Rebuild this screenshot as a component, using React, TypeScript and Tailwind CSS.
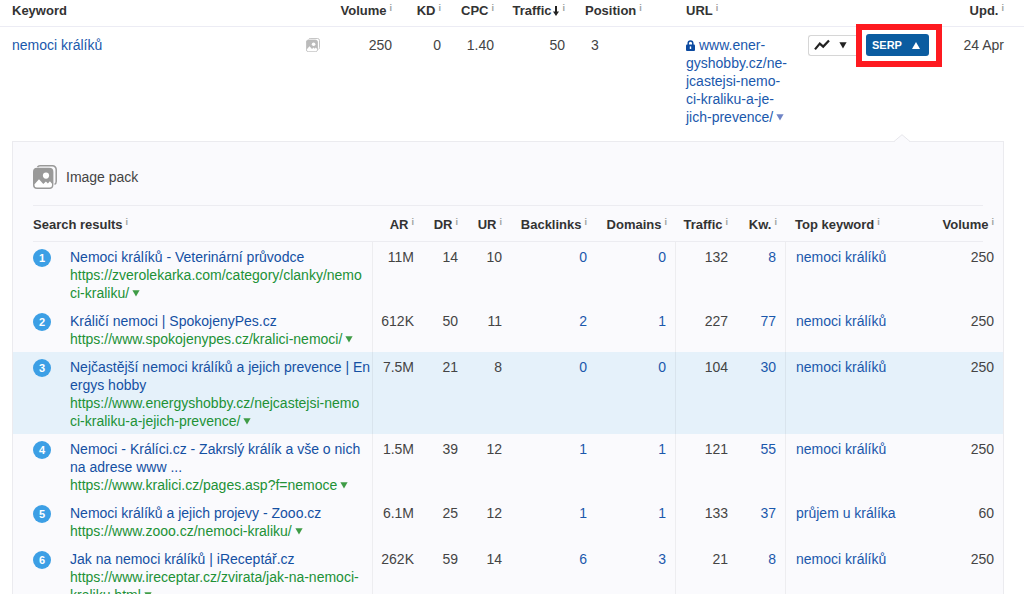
import type { ReactNode } from 'react';

interface Result {
  title: string;
  url: string;
  ar: string;
  dr: number;
  ur: number;
  backlinks: number;
  domains: number;
  traffic: number;
  kw: number;
  topKeyword: string;
  volume: number;
  highlighted?: boolean;
}

const results: Result[] = [
  {
    title: 'Nemoci králíků - Veterinární průvodce',
    url: 'https://zverolekarka.com/category/clanky/nemo\nci-kraliku/',
    ar: '11M', dr: 14, ur: 10, backlinks: 0, domains: 0, traffic: 132, kw: 8,
    topKeyword: 'nemoci králíků', volume: 250,
  },
  {
    title: 'Králičí nemoci | SpokojenyPes.cz',
    url: 'https://www.spokojenypes.cz/kralici-nemoci/',
    ar: '612K', dr: 50, ur: 11, backlinks: 2, domains: 1, traffic: 227, kw: 77,
    topKeyword: 'nemoci králíků', volume: 250,
  },
  {
    title: 'Nejčastější nemoci králíků a jejich prevence | En\nergys hobby',
    url: 'https://www.energyshobby.cz/nejcastejsi-nemo\nci-kraliku-a-jejich-prevence/',
    ar: '7.5M', dr: 21, ur: 8, backlinks: 0, domains: 0, traffic: 104, kw: 30,
    topKeyword: 'nemoci králíků', volume: 250, highlighted: true,
  },
  {
    title: 'Nemoci - Králíci.cz - Zakrslý králík a vše o nich\nna adrese www ...',
    url: 'https://www.kralici.cz/pages.asp?f=nemoce',
    ar: '1.5M', dr: 39, ur: 12, backlinks: 1, domains: 1, traffic: 121, kw: 55,
    topKeyword: 'nemoci králíků', volume: 250,
  },
  {
    title: 'Nemoci králíků a jejich projevy - Zooo.cz',
    url: 'https://www.zooo.cz/nemoci-kraliku/',
    ar: '6.1M', dr: 25, ur: 12, backlinks: 1, domains: 1, traffic: 133, kw: 37,
    topKeyword: 'průjem u králíka', volume: 60,
  },
  {
    title: 'Jak na nemoci králíků | iReceptář.cz',
    url: 'https://www.ireceptar.cz/zvirata/jak-na-nemoci-\nkraliku.html',
    ar: '262K', dr: 59, ur: 14, backlinks: 6, domains: 3, traffic: 21, kw: 8,
    topKeyword: 'nemoci králíků', volume: 250,
  },
];

function Caret({ up = false, className = '' }: { up?: boolean; className?: string }) {
  return (
    <svg viewBox="0 0 8 7" className={`inline-block h-[7px] w-2 ${className}`} fill="currentColor" aria-hidden="true">
      <path d={up ? 'M4 0L8 7H0Z' : 'M.4 .3H7.6L4 6.6Z'} />
    </svg>
  );
}

function ImagePackIcon({ className }: { className: string }) {
  return (
    <svg viewBox="0 0 24 24" className={className} fill="none" aria-hidden="true">
      <path d="M4.5 2.2C5 1.2 6 .8 7 .8h12.5a3.7 3.7 0 0 1 3.7 3.7v12c0 1.4-.5 2.4-1.7 2.9" stroke="currentColor" strokeWidth="1.5" />
      <rect x=".7" y="3.5" width="19" height="19.8" rx="3.4" fill="currentColor" stroke="currentColor" strokeWidth="1.4" />
      <path d="M1.5 19.2L6 14.3l4.3 4.6 2.6-2.5 2 2 2-2.2 2.1 2.6v1.4a2.3 2.3 0 0 1-2.3 2.3H3.8a2.3 2.3 0 0 1-2.3-2.3z" fill="#fff" />
      <circle cx="13" cy="10.6" r="3.1" fill="#fff" />
    </svg>
  );
}

function HeadCell({ children, className = '' }: { children: ReactNode; className?: string }) {
  return (
    <th className={`whitespace-nowrap p-0 align-top text-[13px] leading-5 font-bold text-[#333] ${className}`}>
      {children}
      <span className="relative -top-1 ml-[3px] text-[9px] leading-none font-bold text-[#a0a0a0]">i</span>
    </th>
  );
}

function LinkCell({ children, className = '' }: { children: ReactNode; className?: string }) {
  return (
    <td className={`p-0 pt-1.5 text-right ${className}`}>
      <a href="#" className="text-[#1a58ac]">{children}</a>
    </td>
  );
}

function ResultRow({ result, rank }: { result: Result; rank: number }) {
  return (
    <tr className={`align-top ${result.highlighted ? 'bg-[#e5f1fa]' : ''}`}>
      <td className="p-0 pt-1.5 pl-5">
        <span className="mt-px flex size-[18px] items-center justify-center rounded-full bg-[#3c9fe5] text-[11px] font-bold text-white">
          {rank}
        </span>
      </td>
      <td className="whitespace-pre border-r border-black/5 p-0 pt-1.5 pb-1">
        <a href="#" className="block text-[#1450a3]">{result.title}</a>
        <a href="#" className="block text-[#219136]">
          {result.url}
          <Caret className="ml-[3px] align-[1px] text-[#3f9c46]" />
        </a>
      </td>
      <td className="p-0 pt-1.5 text-right">{result.ar}</td>
      <td className="p-0 pt-1.5 text-right">{result.dr}</td>
      <td className="p-0 pt-1.5 text-right">{result.ur}</td>
      <LinkCell>{result.backlinks}</LinkCell>
      <LinkCell className="border-r border-black/5 pr-[9px]">{result.domains}</LinkCell>
      <td className="p-0 pt-1.5 text-right">{result.traffic}</td>
      <LinkCell className="border-r border-black/5 pr-[9px]">{result.kw}</LinkCell>
      <td className="p-0 pt-1.5 pl-2.5">
        <a href="#" className="text-[#1a58ac]">{result.topKeyword}</a>
      </td>
      <td className="p-0 pt-1.5 pr-[9px] text-right">{result.volume}</td>
    </tr>
  );
}

function SerpPanel() {
  return (
    <section className="relative mr-5 ml-3 border border-[#ebebef] bg-[#fafafd]">
      <svg viewBox="0 0 16 9" className="absolute -top-2 right-[93px] h-[9px] w-4" aria-hidden="true">
        <path d="M0 8L8 .7L16 8V9H0Z" fill="#fafafd" />
        <path d="M0 7.5L8 .7L16 7.5" fill="none" stroke="#e6e6eb" />
      </svg>
      <div className="mx-5 flex items-center gap-[9px] border-b border-[#ececf1] pt-[23px] pb-4 text-sm leading-6 text-[#444]">
        <ImagePackIcon className="size-6 text-[#999]" />
        Image pack
      </div>
      <table className="w-full table-fixed border-separate border-spacing-0 text-sm leading-[18px] text-[#444]">
        <colgroup>
          <col className="w-[57px]" />
          <col />
          <col className="w-[41px]" />
          <col className="w-11" />
          <col className="w-11" />
          <col className="w-[85px]" />
          <col className="w-[89px]" />
          <col className="w-[52px]" />
          <col className="w-[58px]" />
          <col className="w-[134px]" />
          <col className="w-[83px]" />
        </colgroup>
        <thead className="bg-[linear-gradient(#ececf1,#ececf1)] bg-[position:20px_bottom] bg-[size:calc(100%-40px)_1px] bg-no-repeat">
          <tr>
            <HeadCell className="pt-[9px] pb-[7px] pl-5 text-left">Search results</HeadCell>
            <th className="p-0" />
            <HeadCell className="pt-[9px] text-right">AR</HeadCell>
            <HeadCell className="pt-[9px] text-right">DR</HeadCell>
            <HeadCell className="pt-[9px] text-right">UR</HeadCell>
            <HeadCell className="pt-[9px] text-right">Backlinks</HeadCell>
            <HeadCell className="pt-[9px] pr-[9px] text-right">Domains</HeadCell>
            <HeadCell className="pt-[9px] text-right">Traffic</HeadCell>
            <HeadCell className="pt-[9px] pr-[9px] text-right">Kw.</HeadCell>
            <HeadCell className="pt-[9px] pl-[9px] text-left">Top keyword</HeadCell>
            <HeadCell className="pt-[9px] pr-[9px] text-right">Volume</HeadCell>
          </tr>
        </thead>
        <tbody>
          {results.map((result, i) => (
            <ResultRow key={result.url} result={result} rank={i + 1} />
          ))}
        </tbody>
      </table>
    </section>
  );
}

export default function App() {
  return (
    <main className="h-screen overflow-hidden bg-white font-['Liberation_Sans',Arial,sans-serif]">
      <table className="w-full table-fixed border-separate border-spacing-0 text-sm leading-[18px] text-[#444]">
        <colgroup>
          <col />
          <col className="w-16" />
          <col className="w-[49px]" />
          <col className="w-[53px]" />
          <col className="w-[71px]" />
          <col className="w-[121px]" />
          <col className="w-[122px]" />
          <col className="w-[134px]" />
          <col className="w-[82px]" />
        </colgroup>
        <thead>
          <tr>
            <th className="border-b border-[#ececf4] p-0 pt-px pb-[5px] pl-3 text-left align-top text-[13px] leading-5 font-bold text-[#333]">
              Keyword
            </th>
            <HeadCell className="border-b border-[#ececf4] pt-px text-right">Volume</HeadCell>
            <HeadCell className="border-b border-[#ececf4] pt-px text-right">KD</HeadCell>
            <HeadCell className="border-b border-[#ececf4] pt-px text-right">CPC</HeadCell>
            <HeadCell className="border-b border-[#ececf4] pt-px text-right">
              Traffic
              <svg viewBox="0 0 6 10" className="ml-0.5 inline-block h-2.5 w-1.5 align-[-1px]" fill="none" stroke="#222" aria-hidden="true">
                <path d="M3 0V8" strokeWidth="2" />
                <path d="M0 5.6H6L3 10Z" fill="#222" stroke="none" />
              </svg>
            </HeadCell>
            <HeadCell className="border-b border-[#ececf4] pt-px pl-5 text-left">Position</HeadCell>
            <HeadCell className="border-b border-[#ececf4] pt-px text-left">URL</HeadCell>
            <th className="border-b border-[#ececf4] p-0" />
            <HeadCell className="border-b border-[#ececf4] pt-px pr-5 text-right">Upd.</HeadCell>
          </tr>
        </thead>
        <tbody>
          <tr className="align-top">
            <td className="p-0 pt-[9px] pr-2 pl-3">
              <div className="flex items-center justify-between">
                <a href="#" className="text-[#1a58ac]">nemoci králíků</a>
                <ImagePackIcon className="size-3.5 text-[#bbb]" />
              </div>
            </td>
            <td className="p-0 pt-[9px] text-right">250</td>
            <td className="p-0 pt-[9px] text-right">0</td>
            <td className="p-0 pt-[9px] text-right">1.40</td>
            <td className="p-0 pt-[9px] text-right">50</td>
            <td className="p-0 pt-[9px] pl-[26px]">3</td>
            <td className="p-0 pt-[9px] pb-[15px]">
              <a href="#" className="whitespace-pre text-[#1a58ac]">
                <svg viewBox="0 0 9 11" className="mr-1 inline-block h-[11px] w-[9px] align-[-1px]" fill="none" aria-hidden="true">
                  <path d="M2.2 5V3.2a2.3 2.3 0 0 1 4.6 0V5" stroke="#0c4aa0" strokeWidth="1.5" />
                  <rect y="4.4" width="9" height="6.6" rx="1" fill="#0c4aa0" />
                  <rect x="3.8" y="6.4" width="1.4" height="2.6" fill="#fff" />
                </svg>
                {'www.ener-\ngyshobby.cz/ne-\njcastejsi-nemo-\nci-kraliku-a-je-\njich-prevence/'}
                <Caret className="ml-[3px] align-[1px] text-[#6f84c6]" />
              </a>
            </td>
            <td className="p-0 pt-[7px]">
              <div className="flex items-center gap-1.5">
                <button
                  type="button"
                  aria-label="Position history"
                  className="flex h-[21px] w-[52px] items-center gap-[9px] rounded-l-[3px] border border-r-0 border-[#d6d6d6] bg-white pl-[5px] text-[#222]"
                >
                  <svg viewBox="0 0 16 12" className="h-3 w-4" fill="none" stroke="currentColor" strokeWidth="2.2" aria-hidden="true">
                    <path d="M1 10.4L5.8 4.6L9.2 7.6L15 1.4" />
                  </svg>
                  <Caret />
                </button>
                <div className="relative">
                  <button
                    type="button"
                    aria-expanded="true"
                    className="flex h-[22px] w-[63px] items-center justify-between rounded-[3px] bg-[#0b5ca0] pr-[9px] pl-1.5 text-[11px] font-bold text-white"
                  >
                    SERP
                    <Caret up />
                  </button>
                  <div className="pointer-events-none absolute -top-2.5 -right-[13px] -bottom-[11px] -left-2.5 border-[6px] border-[#fe1a20]" />
                </div>
              </div>
            </td>
            <td className="p-0 pt-[9px] pr-5 text-right">24 Apr</td>
          </tr>
        </tbody>
      </table>
      <SerpPanel />
    </main>
  );
}
